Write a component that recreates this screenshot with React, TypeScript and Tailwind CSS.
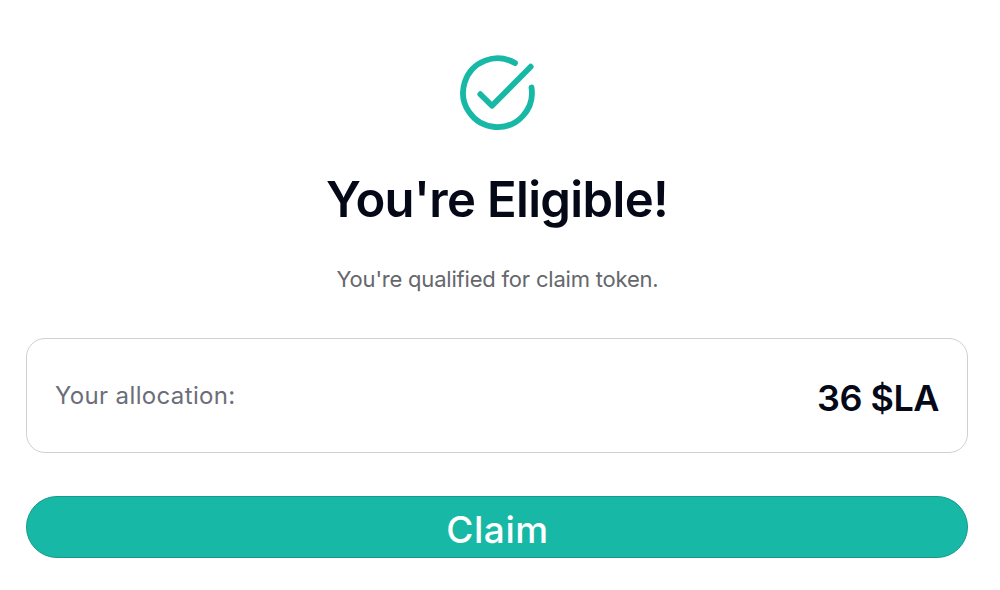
const allocation = {
  label: "Your allocation:",
  amount: "36 $LA",
}

function CheckCircleIcon() {
  return (
    <svg
      className="size-20"
      viewBox="0 0 80 80"
      fill="none"
      stroke="currentColor"
      strokeWidth="5.8"
      strokeLinecap="round"
      strokeLinejoin="round"
      aria-hidden="true"
    >
      <path d="M58 10.1A34.4 34.4 0 1 0 74.5 34.5" />
      <path d="m23.3 41.2 11.7 11.6L73.7 13.7" />
    </svg>
  )
}

export default function App() {
  return (
    <main className="flex h-[590px] w-[1000px] flex-col items-center overflow-hidden bg-white pt-[53px] pr-8 pl-[26px] font-['Inter',sans-serif]">
      <div className="text-[#18b8a7]">
        <CheckCircleIcon />
      </div>
      <h1 className="mt-9 text-[49px] leading-[62px] font-semibold tracking-[-0.65px] whitespace-nowrap text-[#050816]">
        You're Eligible!
      </h1>
      <p className="mt-8 pl-px text-[22px] leading-8 tracking-[-0.2px] whitespace-nowrap text-[#65676c]">
        You're qualified for claim token.
      </p>

      <section className="mt-[43px] flex h-[115px] w-full shrink-0 items-center justify-between rounded-[19px] border border-[#d0d0d3] px-7">
        <span className="text-[24px] leading-8 tracking-[0.36px] text-[#6b6e78]">{allocation.label}</span>
        <strong className="mt-1 text-[36px] leading-10 font-semibold tracking-[-0.5px] text-[#050816]">
          {allocation.amount}
        </strong>
      </section>

      <button
        type="button"
        className="mt-[43px] flex h-[62px] w-full shrink-0 items-center justify-center rounded-full border border-[#159a8d] bg-[#18b8a7] pt-1 pl-px text-[37px] leading-none font-medium tracking-[0.6px] text-white"
      >
        Claim
      </button>
    </main>
  )
}
